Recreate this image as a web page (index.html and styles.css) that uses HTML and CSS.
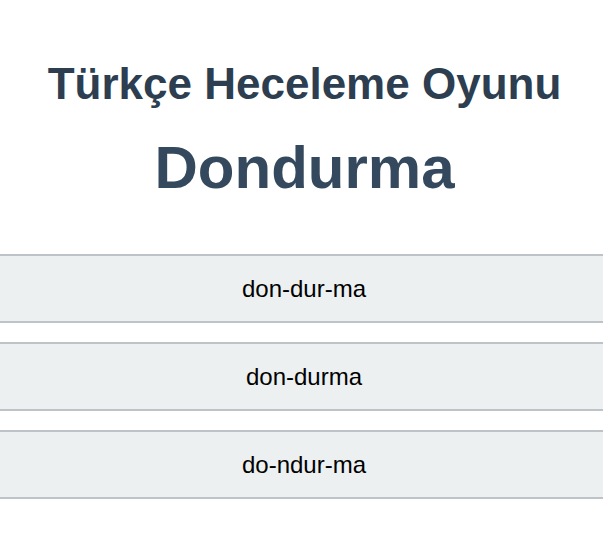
FILE: index.html
```html
<!DOCTYPE html>
<html lang="tr">
<head>
<meta charset="utf-8">
<title>Türkçe Heceleme Oyunu</title>
<link rel="stylesheet" href="styles.css">
</head>
<body>
<header class="header">
  <h1 class="title">Türkçe Heceleme Oyunu</h1>
  <h2 class="word">Dondurma</h2>
</header>
<main class="options">
  <button class="option">don-dur-ma</button>
  <button class="option">don-durma</button>
  <button class="option">do-ndur-ma</button>
</main>
</body>
</html>
```

FILE: styles.css
```css
html, body {
  margin: 0;
  padding: 0;
  background: #ffffff;
}

body {
  font-family: "Liberation Sans", Arial, sans-serif;
}

.header {
  text-align: center;
  padding-top: 58px;
  padding-left: 6px;
}

.title {
  margin: 0;
  font-size: 44px;
  line-height: 51px;
  font-weight: bold;
  color: #2c3e50;
}

.word {
  margin: 24px 0 0;
  font-size: 60px;
  line-height: 69px;
  font-weight: bold;
  color: #34495e;
}

.options {
  display: flex;
  flex-direction: column;
  gap: 19px;
  margin-top: 52px;
}

.option {
  display: block;
  width: 100%;
  margin: 0;
  padding: 19px 0 18px 5px;
  background: #ecf0f1;
  border: none;
  border-top: 2px solid #bdc3c7;
  border-bottom: 2px solid #bdc3c7;
  font-family: "Liberation Sans", Arial, sans-serif;
  font-size: 24px;
  line-height: 28px;
  color: #000000;
  text-align: center;
  cursor: pointer;
}
```
